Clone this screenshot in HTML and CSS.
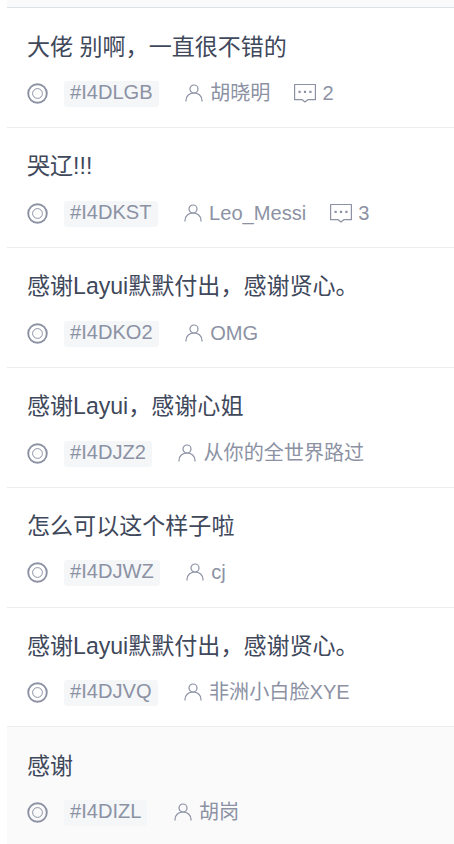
FILE: index.html
```
<!DOCTYPE html>
<html lang="zh-CN">
<head>
    <meta charset="UTF-8">
    <meta name="viewport" content="width=device-width, initial-scale=1.0">
    <title>Issues</title>
    <link rel="stylesheet" href="styles.css">
</head>
<body>

<svg class="sprite" width="0" height="0">
    <symbol id="icon-open" viewBox="0 0 21 21">
        <circle cx="10.5" cy="10.5" r="9.3" stroke-width="1.9"/>
        <circle cx="10.5" cy="10.5" r="4.9" stroke-width="1"/>
    </symbol>
    <symbol id="icon-user" viewBox="0 0 18 18">
        <circle cx="9" cy="5" r="4"/>
        <path d="M1 17.5v-1C1 12 4.600 9 9 9s8 3 8 7.500v1"/>
    </symbol>
    <symbol id="icon-comment" viewBox="0 0 22 20">
        <path d="M.6 1.500h20.800v15.200h-7.600L11 19 8.200 16.700H.6z" stroke-linejoin="round"/>
        <path class="dots" d="M4.500 7.800h2.200v2.200H4.500zM9.900 7.800h2.200v2.200H9.900zM15.300 7.800h2.200v2.200h-2.200z"/>
    </symbol>
</svg>

<div class="issues">
    <div class="issues-header"></div>
    <div class="issue first">
        <div class="title">大佬 别啊，一直很不错的</div>
        <div class="meta">
            <svg class="icon-open"><use href="#icon-open"/></svg>
            <span class="tag">#I4DLGB</span>
            <span class="user"><svg class="icon-user"><use href="#icon-user"/></svg>胡晓明</span>
            <span class="comment"><svg class="icon-comment"><use href="#icon-comment"/></svg>2</span>
        </div>
    </div>
    <div class="issue">
        <div class="title">哭辽!!!</div>
        <div class="meta">
            <svg class="icon-open"><use href="#icon-open"/></svg>
            <span class="tag">#I4DKST</span>
            <span class="user"><svg class="icon-user"><use href="#icon-user"/></svg>Leo_Messi</span>
            <span class="comment"><svg class="icon-comment"><use href="#icon-comment"/></svg>3</span>
        </div>
    </div>
    <div class="issue">
        <div class="title">感谢Layui默默付出，感谢贤心。</div>
        <div class="meta">
            <svg class="icon-open"><use href="#icon-open"/></svg>
            <span class="tag">#I4DKO2</span>
            <span class="user"><svg class="icon-user"><use href="#icon-user"/></svg>OMG</span>
        </div>
    </div>
    <div class="issue">
        <div class="title">感谢Layui，感谢心姐</div>
        <div class="meta">
            <svg class="icon-open"><use href="#icon-open"/></svg>
            <span class="tag">#I4DJZ2</span>
            <span class="user"><svg class="icon-user"><use href="#icon-user"/></svg>从你的全世界路过</span>
        </div>
    </div>
    <div class="issue tight">
        <div class="title">怎么可以这个样子啦</div>
        <div class="meta">
            <svg class="icon-open"><use href="#icon-open"/></svg>
            <span class="tag">#I4DJWZ</span>
            <span class="user"><svg class="icon-user"><use href="#icon-user"/></svg>cj</span>
        </div>
    </div>
    <div class="issue tight short">
        <div class="title">感谢Layui默默付出，感谢贤心。</div>
        <div class="meta">
            <svg class="icon-open"><use href="#icon-open"/></svg>
            <span class="tag">#I4DJVQ</span>
            <span class="user"><svg class="icon-user"><use href="#icon-user"/></svg>非洲小白脸XYE</span>
        </div>
    </div>
    <div class="issue tight active">
        <div class="title">感谢</div>
        <div class="meta">
            <svg class="icon-open"><use href="#icon-open"/></svg>
            <span class="tag">#I4DIZL</span>
            <span class="user"><svg class="icon-user"><use href="#icon-user"/></svg>胡岗</span>
        </div>
    </div>
</div>

</body>
</html>
```
FILE: styles.css
```
body {
    margin: 0;
    height: 844px;
    overflow: hidden;
    background: #fff;
    font-family: "Liberation Sans", "Noto Sans CJK SC", sans-serif;
}
.sprite {
    position: absolute;
}
.issues {
    margin-left: 7px;
}
.issues-header {
    box-sizing: border-box;
    height: 8px;
    background: #fafafa;
    border-bottom: 1px solid #dce1e6;
}
.issue {
    box-sizing: border-box;
    height: 120px;
    padding: 22px 20px 0;
    border-bottom: 1px solid #ebedf0;
}
.issue.first {
    padding-top: 23px;
}
.issue.short {
    height: 119px;
}
.issue.active {
    padding-top: 23px;
    background: #fafafa;
    border-bottom: none;
}
.title {
    height: 32px;
    line-height: 32px;
    font-size: 23.05px;
    color: #40485b;
    white-space: nowrap;
}
.meta {
    display: flex;
    align-items: flex-start;
    height: 26px;
    margin-top: 19px;
    font-size: 20.1px;
    line-height: 24px;
    color: #8c92a4;
    white-space: nowrap;
}
.first .meta,
.tight .meta {
    margin-top: 18px;
}
.meta svg {
    flex: none;
    fill: none;
    stroke: #8c92a4;
    stroke-width: 1.2;
}
.meta .icon-open {
    width: 21px;
    height: 21px;
    margin-top: 2px;
}
.tag {
    height: 26px;
    margin-left: 16px;
    padding: 0 6px;
    line-height: 23px;
    border-radius: 3px;
    background: #f4f6f8;
}
.user,
.comment {
    display: flex;
    height: 24px;
}
.user {
    margin-left: 26.5px;
}
.comment {
    margin-left: 24px;
}
.meta .icon-user {
    width: 18px;
    height: 18px;
    margin: 3px 7px 0 0;
}
.meta .icon-comment {
    width: 22px;
    height: 20px;
    margin: 2px 6px 0 0;
}
.dots {
    fill: #8c92a4;
    stroke: none;
}
```
